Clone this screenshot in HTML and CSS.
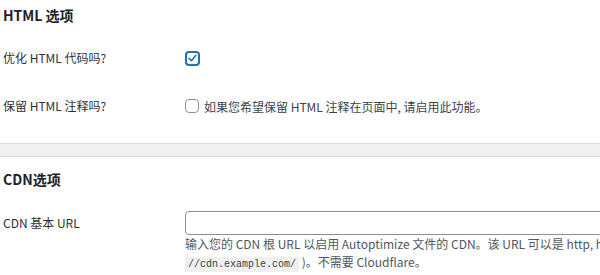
FILE: index.html
```html
<!DOCTYPE html>
<html lang="zh-CN">
<head>
    <meta charset="UTF-8">
    <meta name="viewport" content="width=device-width, initial-scale=1.0">
    <title>Autoptimize 设置</title>
    <link rel="stylesheet" href="styles.css">
</head>
<body>
    <section class="panel panel-html">
        <h2>HTML 选项</h2>
        <div class="form-table">
            <div class="row">
                <div class="label">优化 HTML 代码吗?</div>
                <div class="field">
                    <span class="checkbox checked">
                        <svg viewBox="0 0 16 16" width="12" height="12"><path d="M3 8.5 L6.5 12 L13 4" fill="none" stroke="#2271b1" stroke-width="2.2" stroke-linecap="round" stroke-linejoin="round"/></svg>
                    </span>
                </div>
            </div>
            <div class="row">
                <div class="label">保留 HTML 注释吗?</div>
                <div class="field">
                    <span class="checkbox"></span>
                    <span class="inline-text">如果您希望保留 HTML 注释在页面中, 请启用此功能。</span>
                </div>
            </div>
        </div>
    </section>

    <div class="divider"></div>

    <section class="panel panel-cdn">
        <h2>CDN选项</h2>
        <div class="form-table">
            <div class="row row-cdn">
                <div class="label">CDN 基本 URL</div>
                <div class="field field-wide">
                    <input type="text" class="text-input">
                    <p class="description">输入您的 CDN 根 URL 以启用 Autoptimize 文件的 CDN。该 URL 可以是 http, https 或协议相对地址 (例如<br><code>//cdn.example.com/</code> )。不需要 Cloudflare。</p>
                </div>
            </div>
        </div>
    </section>
</body>
</html>
```

FILE: styles.css
```css
html, body {
    overflow: hidden;
}
body {
    margin: 0;
    background-color: #fff;
    color: #1d2327;
    font-family: "Noto Sans CJK SC", "Noto Sans", sans-serif;
    font-size: 12px;
}
.panel {
    padding: 0 0 0 3px;
}
.panel h2 {
    margin: 0;
    font-size: 14px;
    font-weight: 600;
    line-height: 20px;
}
.panel-html {
    padding-top: 5px;
    padding-bottom: 13px;
}
.panel-html .form-table {
    margin-top: 9px;
}
.panel-cdn {
    padding-top: 12px;
}
.panel-cdn .form-table {
    margin-top: 22px;
}
.row {
    display: grid;
    grid-template-columns: 182px 1fr;
    align-items: center;
    height: 48px;
}
.row-cdn {
    height: auto;
    align-items: start;
}
.label {
    color: #2c3338;
    line-height: 24px;
}
.field {
    display: flex;
    align-items: center;
    gap: 5px;
}
.field-wide {
    display: block;
    width: 640px;
}
.checkbox {
    box-sizing: border-box;
    display: flex;
    align-items: center;
    justify-content: center;
    width: 14px;
    height: 14px;
    border: 1px solid #8c8f94;
    border-radius: 4px;
    background: #fff;
}
.checkbox.checked {
    width: 15px;
    height: 15px;
    border: 2px solid #2271b1;
}
.inline-text {
    color: #3c434a;
}
.divider {
    height: 12px;
    background-color: #f0f0f1;
    border-top: 1px solid #dcdcde;
    border-bottom: 1px solid #dcdcde;
}
.text-input {
    box-sizing: border-box;
    display: block;
    width: 100%;
    height: 24px;
    margin: 0;
    border: 1px solid #8c8f94;
    border-radius: 4px;
    background: #fff;
}
.description {
    margin: 0;
    color: #50575e;
    line-height: 18px;
}
.description code {
    font-family: "Liberation Mono", monospace;
    font-size: 10px;
    padding: 2px 3px;
    background-color: #f0f0f1;
    color: #3c434a;
}
```
